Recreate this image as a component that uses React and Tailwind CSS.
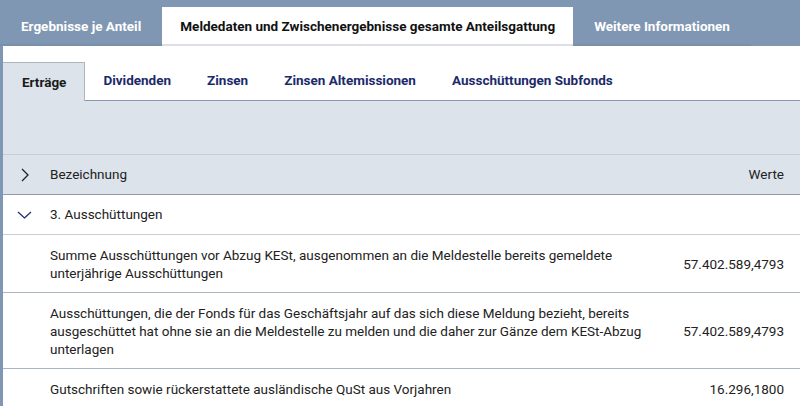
const topTabs = [
  { label: "Ergebnisse je Anteil", active: false },
  { label: "Meldedaten und Zwischenergebnisse gesamte Anteilsgattung", active: true },
  { label: "Weitere Informationen", active: false },
];

const subTabs = ["Erträge", "Dividenden", "Zinsen", "Zinsen Altemissionen", "Ausschüttungen Subfonds"];

const rows = [
  {
    text: "Summe Ausschüttungen vor Abzug KESt, ausgenommen an die Meldestelle bereits gemeldete unterjährige Ausschüttungen",
    value: "57.402.589,4793",
  },
  {
    text: "Ausschüttungen, die der Fonds für das Geschäftsjahr auf das sich diese Meldung bezieht, bereits ausgeschüttet hat ohne sie an die Meldestelle zu melden und die daher zur Gänze dem KESt-Abzug unterlagen",
    value: "57.402.589,4793",
  },
  {
    text: "Gutschriften sowie rückerstattete ausländische QuSt aus Vorjahren",
    value: "16.296,1800",
  },
];

function ChevronRight() {
  return (
    <svg width="10" height="14" viewBox="0 0 10 14" fill="none">
      <path d="M2 1l6 6-6 6" stroke="#222" strokeWidth="1.3" />
    </svg>
  );
}

function ChevronDown() {
  return (
    <svg width="15" height="8" viewBox="0 0 15 8" fill="none">
      <path d="M1 1l6.5 6L14 1" stroke="#1b2a6b" strokeWidth="1.2" />
    </svg>
  );
}

export default function App() {
  return (
    <div className="w-[800px] h-[406px] overflow-hidden bg-white font-['Roboto',sans-serif] text-[13.5px]">
      {/* top tabs */}
      <div className="flex items-end h-[46px] bg-[#7f97b2]">
        {topTabs.map((t) =>
          t.active ? (
            <div
              key={t.label}
              className="flex items-center h-[39px] px-[18px] pt-px bg-white border-b-2 border-[#dcdfe3] text-[#111] font-bold"
            >
              {t.label}
            </div>
          ) : (
            <div
              key={t.label}
              className="flex items-center h-[39px] px-[21px] pt-px text-white font-bold border-b-2 border-[#7890ab]"
            >
              {t.label}
            </div>
          )
        )}
      </div>

      <div className="border-l-[3px] border-[#7f97b2]">
        {/* sub tabs */}
        <div className="flex items-end h-[55px] border-b border-[#8a99ad]">
          {subTabs.map((s, i) =>
            i === 0 ? (
              <div
                key={s}
                className="flex items-center h-[39px] pl-[19px] pr-[18px] -mb-px bg-[#dce3ea] border-t border-r border-[#a9b6c4] text-[#1a1a1a] font-bold"
              >
                {s}
              </div>
            ) : (
              <div key={s} className="flex items-center h-[39px] px-[18px] text-[#1b2a6b] font-bold">
                {s}
              </div>
            )
          )}
        </div>

        <div className="h-[54px] bg-[#dce3ea] border-b border-[#c7cdd4]" />

        {/* header */}
        <div className="flex items-center h-[40px] bg-[#dce3ea] border-b border-[#8d9ab0] text-[#222]">
          <div className="w-[47px] pl-[17px] flex items-center">
            <ChevronRight />
          </div>
          <div className="flex-1">Bezeichnung</div>
          <div className="pr-[16px]">Werte</div>
        </div>

        <div className="flex items-center h-[40px] border-b border-[#c8ced6] text-[#222]">
          <div className="w-[47px] pl-[14px] flex items-center">
            <ChevronDown />
          </div>
          <div>3. Ausschüttungen</div>
        </div>

        {rows.map((r) => (
          <div key={r.value + r.text.length} className="flex items-center border-b border-[#aab4c8] text-[#222] leading-[18px]">
            <div className="w-[680px] pl-[47px] pr-[20px] pt-[11px] pb-[10px]">{r.text}</div>
            <div className="flex-1 text-right pr-[16px]">{r.value}</div>
          </div>
        ))}
      </div>
    </div>
  );
}
